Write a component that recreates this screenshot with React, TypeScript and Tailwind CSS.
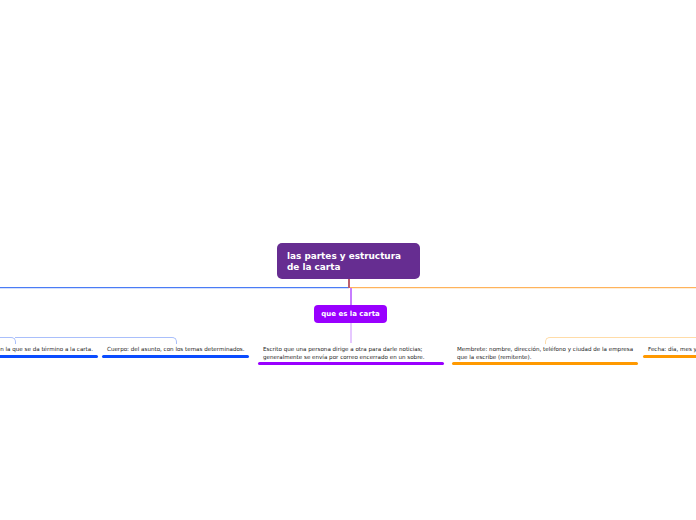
type LeafProps = {
  lines: string[];
  bar: string;
  className?: string;
  barClassName?: string;
};

function Leaf({ lines, bar, className = "", barClassName = "" }: LeafProps) {
  return (
    <div className={`flex shrink-0 flex-col ${className}`}>
      <div className="px-[5px] text-[5.58px] leading-[7.5px] text-[#222] whitespace-nowrap">
        {lines.map((line) => (
          <div key={line}>{line}</div>
        ))}
      </div>
      <div className={`h-[3px] rounded-full ${bar} ${barClassName}`} />
    </div>
  );
}

export default function App() {
  return (
    <main className="relative w-[696px] h-[520px] overflow-hidden bg-white font-['DejaVu_Sans',sans-serif]">
      {/* connector lines of the map */}
      <div className="absolute left-0 top-[287px] w-[349px] h-px bg-[#4a7cf5] shadow-[0_1px_0_#d5e0fc]" />
      <div className="absolute left-[350px] top-[287px] w-[346px] h-px bg-[#ffb35c] shadow-[0_1px_0_#ffeed8]" />
      <div className="absolute left-[348px] top-[279px] w-[2px] h-[9px] bg-[#bd5f6e]" />
      <div className="absolute left-[350px] top-[288px] w-[2px] h-[17px] bg-[#c77dff]" />
      <div className="absolute left-[350px] top-[323px] w-[2px] h-[20px] bg-[#e6c8ff]" />
      <div className="absolute left-[-20px] top-[337px] w-[36px] h-[7px] border-t border-r border-[#a9bffb] rounded-tr-[5px]" />
      <div className="absolute left-[15px] top-[337px] w-[162px] h-[7px] border-t border-r border-[#a9bffb] rounded-tr-[5px]" />
      <div className="absolute left-[545px] top-[337px] w-[160px] h-[7px] border-t border-l border-[#ffdca8] rounded-tl-[5px]" />

      {/* nodes */}
      <div className="absolute left-[277px] top-[243px] w-[143px] h-[36px] rounded-[5px] bg-[#662d91] pl-[10px] pt-[8px] text-[8.9px] leading-[11px] font-bold text-white">
        las partes y estructura
        <br />
        de la carta
      </div>
      <div className="absolute left-[314px] top-[305px] w-[73px] h-[18px] rounded-[4px] bg-[#9900ff] flex items-center justify-center text-[7px] font-bold text-white">
        que es la carta
      </div>

      {/* leaf row, runs past both edges of the canvas */}
      <div className="absolute right-[-60px] top-[346px] flex items-start">
        <Leaf
          lines={["Despedida: en la que se da término a la carta."]}
          bar="bg-[#0a4cff]"
          className="mr-[4px]"
          barClassName="mt-[1.5px]"
        />
        <Leaf
          lines={["Cuerpo: del asunto, con los temas determinados."]}
          bar="bg-[#0a4cff]"
          className="mr-[9px] w-[147px]"
          barClassName="mt-[1.5px]"
        />
        <Leaf
          lines={[
            "Escrito que una persona dirige a otra para darle noticias;",
            "generalmente se envía por correo encerrado en un sobre.",
          ]}
          bar="bg-[#9900ff]"
          className="mr-[8px] w-[186px]"
          barClassName="mt-[1px]"
        />
        <Leaf
          lines={[
            "Membrete: nombre, dirección, teléfono y ciudad de la empresa",
            "que la escribe (remitente).",
          ]}
          bar="bg-[#ff9900]"
          className="mr-[5px] w-[186px]"
          barClassName="mt-[1px]"
        />
        <Leaf
          lines={["Fecha: día, mes y año."]}
          bar="bg-[#ff9900]"
          className="w-[113px]"
          barClassName="mt-[1.5px]"
        />
      </div>
    </main>
  );
}
